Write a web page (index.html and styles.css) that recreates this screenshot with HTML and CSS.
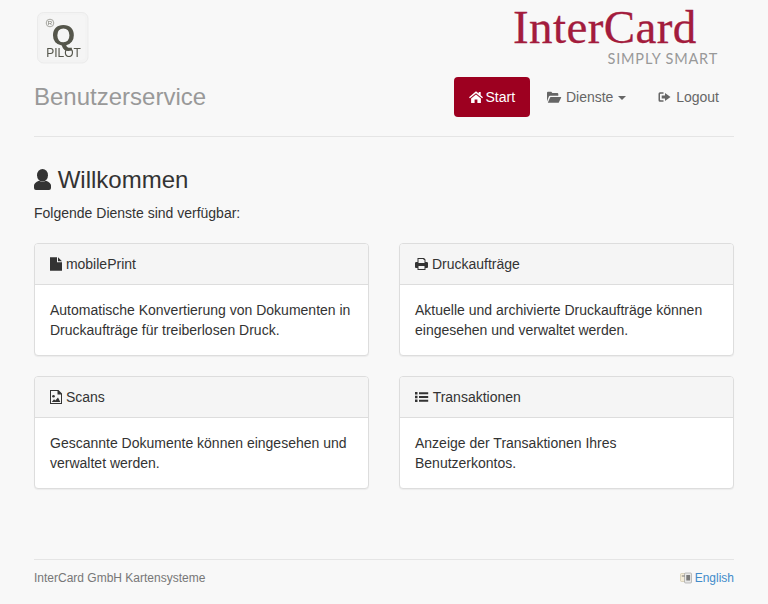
FILE: index.html
```html
<!DOCTYPE html>
<html lang="de">
<head>
<meta charset="utf-8">
<title>Benutzerservice</title>
<link rel="stylesheet" href="styles.css">
</head>
<body>
<div class="container">
  <header class="brand-row">
    <svg class="q-logo" viewBox="0 0 52 52" width="52" height="52">
      <defs>
        <filter id="soft"><feGaussianBlur stdDeviation="0.3"/></filter>
      </defs>
      <rect class="q-frame" x="0.5" y="0.5" width="50.500" height="50.500" rx="6"/>
      <rect class="q-face" x="3" y="3" width="45" height="45" rx="4"/>
      <g filter="url(#soft)">
        <circle class="q-reg-ring" cx="13" cy="11" r="3.800"/>
        <text class="q-reg" x="13" y="13" text-anchor="middle">R</text>
        <text class="q-big" x="26.500" y="33" text-anchor="middle">Q</text>
        <text class="q-pilot" x="26.500" y="44.500" text-anchor="middle">PILOT</text>
      </g>
    </svg>
    <div class="ic-logo">
      <div class="ic-name">InterCard</div>
      <div class="ic-tag">SIMPLY SMART</div>
    </div>
  </header>
  <div class="title-row">
    <div class="site-title">Benutzerservice</div>
    <nav class="pills">
      <a class="pill active">
        <svg class="gi gi-home" viewBox="0 0 14 14"><path d="M7 1.200 0 7.300l.9 1L7 3.200l6.100 5.100.9-1-2.300-2V2h-2v1.600zM2.100 8.500V13h3.500V9.500h2.800V13h3.500V8.500L7 4.500z"/></svg>
        Start
      </a>
      <a class="pill">
        <svg class="gi gi-wide" viewBox="0 0 15 14"><path d="M0 11.500V2.800q0-1 1-1h3.300l1 1.200h5q1 0 1 1v1.700H3q-.8 0-1.100.7zM.8 12.800 3.200 7.300q.2-.4.6-.4h10q.7 0 .4.6l-2.300 4.800q-.2.5-.7.5z"/></svg>
        Dienste <span class="caret"></span>
      </a>
      <a class="pill">
        <svg class="gi" viewBox="0 0 14 14"><path d="M5.500 2.300H2q-1.500 0-1.500 1.500v6.400q0 1.500 1.500 1.500h3.500v-1.500H2.600q-.6 0-.6-.6V4.400q0-.6.6-.6h2.900z"/><path d="M7 3v2.500H3.700v3H7V11l5.500-4z"/></svg>
        Logout
      </a>
    </nav>
  </div>

  <main>
    <h2 class="welcome">
      <svg class="gi-user" viewBox="0 0 17 21"><ellipse cx="8.500" cy="6.300" rx="5.500" ry="6.300"/><path d="M0 16.500q0-2.800 5-4.800 3.500 2 7 0 5 2 5 4.800V19q0 2-2 2H2q-2 0-2-2z"/></svg>
      Willkommen
    </h2>
    <p class="intro">Folgende Dienste sind verfügbar:</p>
    <div class="panels">
      <section class="panel">
        <div class="panel-heading">
          <svg class="gi gi-narrow" viewBox="0 0 12 14"><path d="M0 .3h7v5h5v8.400H0zM8 .3l4 4H8z"/></svg>
          mobilePrint
        </div>
        <div class="panel-body">Automatische Konvertierung von Dokumenten in Druckaufträge für treiberlosen Druck.</div>
      </section>
      <section class="panel">
        <div class="panel-heading">
          <svg class="gi gi-print" viewBox="0 0 13 14"><path fill-rule="evenodd" d="M2.500 1h6.500L10.500 2.500V5h1.300Q13 5 13 6.300V10q0 1-1 1h-1.500v2h-8v-2H1q-1 0-1-1V6.300Q0 5 1.200 5h1.300zm1 1v4h6V3H8.500V2zM3.500 9v3h6V9z"/></svg>
          Druckaufträge
        </div>
        <div class="panel-body">Aktuelle und archivierte Druckaufträge können eingesehen und verwaltet werden.</div>
      </section>
      <section class="panel">
        <div class="panel-heading">
          <svg class="gi gi-narrow" viewBox="0 0 12 14"><path fill-rule="evenodd" d="M0 0h8.500L12 3.500V14H0zm1 1v12h10V4.500H7.500V1z"/><circle cx="3.500" cy="6.300" r="1.300"/><path d="M1.800 12 4 9.300l1.300 1.200L8 7.500l2.300 4.500z"/></svg>
          Scans
        </div>
        <div class="panel-body">Gescannte Dokumente können eingesehen und verwaltet werden.</div>
      </section>
      <section class="panel">
        <div class="panel-heading">
          <svg class="gi" viewBox="0 0 14 14"><path d="M0 2h2.500v2.500H0zM4 2.300h9.200v2H4zM0 5.800h2.500v2.500H0zM4 6h9.200v2H4zM0 9.500h2.500V12H0zM4 9.800h9.200v2H4z"/></svg>
          Transaktionen
        </div>
        <div class="panel-body">Anzeige der Transaktionen Ihres Benutzerkontos.</div>
      </section>
    </div>
  </main>

  <footer class="footer">
    <span>InterCard GmbH Kartensysteme</span>
    <a class="lang">
      <svg class="flag" viewBox="0 0 12 12"><rect class="flag-back" x="0.500" y="1.500" width="6.500" height="8" rx="1"/><rect class="flag-front" x="4.500" y="1" width="7" height="10" rx="1"/><path class="flag-mark" d="M1.800 3.500h3v1h-3zM6.300 3h3.800v5.500H6.300z"/></svg>
      English
    </a>
  </footer>
</div>
</body>
</html>
```
FILE: styles.css
```css
* { box-sizing: border-box; }
html, body { margin: 0; padding: 0; }
body {
  background: #f8f8f8;
  color: #333;
  font: 14px/20px "Liberation Sans", Arial, sans-serif;
}
.container { width: 700px; margin: 0 auto; }

/* brand */
.brand-row {
  display: flex;
  justify-content: space-between;
  align-items: flex-start;
  height: 77px;
  padding: 0 14px 0 3px;
}
.q-logo { display: block; margin-top: 12px; }
.q-frame { fill: #f3f3f3; stroke: #ebebeb; stroke-width: 1; }
.q-face { fill: #f5f5f5; }
.q-big { font: bold 30px "Liberation Sans", sans-serif; fill: #55564b; }
.q-pilot { font: 12px "Liberation Sans", sans-serif; fill: #55564b; }
.q-reg { font: 6px "Liberation Sans", sans-serif; fill: #77776e; }
.q-reg-ring { fill: none; stroke: #85857c; stroke-width: .7; }
.ic-logo { width: 207px; display: flex; flex-direction: column; }
.ic-name {
  font: 47px/40px "Liberation Serif", "Times New Roman", serif;
  color: #a31c3d;
  letter-spacing: .4px;
  -webkit-text-stroke: .3px #a31c3d;
  height: 40px;
  margin-top: 7px;
}
.ic-tag {
  font: 14.500px/16px "Lato", sans-serif;
  color: #999;
  letter-spacing: .8px;
  text-align: right;
  padding-right: 2px;
  margin-top: 4px;
}

/* title + nav */
.title-row {
  display: flex;
  justify-content: space-between;
  align-items: center;
  height: 60px;
  padding-bottom: 19px;
  border-bottom: 1px solid #e5e5e5;
}
.site-title { font-size: 24px; line-height: 40px; color: #999; }
.pills { display: flex; gap: 2px; }
.pill {
  display: block;
  padding: 10px 15px;
  border-radius: 4px;
  color: #666;
  white-space: nowrap;
}
.pill.active { background: #9d0020; color: #fff; }
.gi {
  width: 14px;
  height: 14px;
  fill: currentColor;
  vertical-align: -2px;
}
.gi-home { margin-right: -1px; }
.gi-wide { width: 15px; }
.gi-narrow { width: 12px; }
.gi-print { width: 13px; }
.caret {
  display: inline-block;
  width: 0;
  height: 0;
  margin-left: 1px;
  vertical-align: middle;
  border-top: 4px solid currentColor;
  border-left: 4px solid transparent;
  border-right: 4px solid transparent;
}

/* content */
.welcome {
  margin: 30px 0 10px;
  font-size: 24px;
  font-weight: 500;
  line-height: 26px;
  color: #333;
}
.gi-user { width: 17px; height: 21px; fill: currentColor; vertical-align: -2px; }
.intro { margin: 0 0 20px; }
.panels {
  display: grid;
  grid-template-columns: 335px 335px;
  column-gap: 30px;
  row-gap: 20px;
}
.panel {
  background: #fff;
  border: 1px solid #ddd;
  border-radius: 4px;
  box-shadow: 0 1px 1px rgba(0, 0, 0, .05);
}
.panel-heading {
  height: 41px;
  padding: 10px 15px;
  background: #f5f5f5;
  border-bottom: 1px solid #ddd;
  border-radius: 3px 3px 0 0;
}
.panel-body { padding: 15px; }

/* footer */
.footer {
  display: flex;
  justify-content: space-between;
  align-items: center;
  margin-top: 70px;
  height: 37px;
  border-top: 1px solid #e5e5e5;
  font-size: 12px;
  color: #777;
}
.lang { color: #428bca; }
.flag { width: 12px; height: 12px; vertical-align: -2px; margin-left: 1px; margin-right: -1px; }
.flag-back { fill: #f4ecd8; stroke: #c9bfa0; stroke-width: .6; }
.flag-front { fill: #e8e8e8; stroke: #999; stroke-width: .6; }
.flag-mark { fill: #7a7a7a; }
```
